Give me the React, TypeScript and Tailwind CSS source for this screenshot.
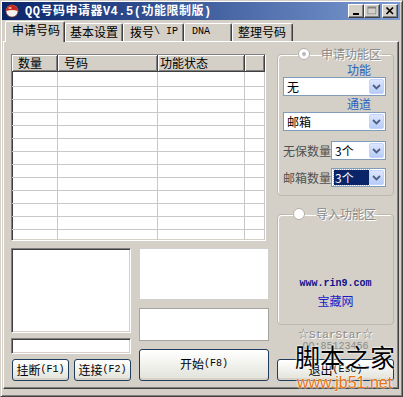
import React from "react";

const cjk = "[font-family:'Noto_Sans_CJK_SC','Noto_Sans',sans-serif]";
const mono = "[font-family:'Liberation_Mono','Noto_Sans_CJK_SC',monospace]";
const sunken =
  "border border-t-[#808080] border-l-[#808080] border-r-white border-b-white shadow-[inset_1px_1px_0_#404040,inset_-1px_-1px_0_#d4d0c8]";
const raised =
  "border border-t-white border-l-white border-r-[#404040] border-b-[#404040] shadow-[inset_-1px_-1px_0_#808080]";
const xpButton =
  "flex items-center justify-center rounded-[3px] border border-[#1f3d5c] bg-linear-to-b from-white to-[#e2e2da] shadow-[inset_0_-2px_0_#d8d2c6,inset_0_1px_0_#fff] text-[12px] text-black";

type Tab = { label: React.ReactNode; w: string; pl: string };

const tabs: Tab[] = [
  { label: "基本设置", w: "w-[58px]", pl: "pl-[4px]" },
  {
    label: (
      <>
        拨号<span className={`${mono} text-[10px]`}>\ IP</span>
      </>
    ),
    w: "w-[61px]",
    pl: "pl-[6px]",
  },
  { label: <span className={`${mono} text-[10px]`}>DNA</span>, w: "w-[48px]", pl: "pl-[7px]" },
  { label: "整理号码", w: "w-[61px]", pl: "pl-[5px]" },
];

const cols = ["w-[46px]", "w-[100px]", "w-[87px]", "w-[20px]"];

function Ascii({ children }: { children: React.ReactNode }) {
  return <span className={`${mono} text-[10px]`}>{children}</span>;
}

function CaptionBtn({ children }: { children: React.ReactNode }) {
  return (
    <div className={`h-[14px] w-[16px] bg-[#d4d0c8] ${raised} flex items-center justify-center`}>
      {children}
    </div>
  );
}

function TitleBar() {
  const a = `${mono} text-[12px]`;
  return (
    <div className="flex h-[18px] items-center bg-linear-to-r from-[#0a246a] to-[#7d9bd2] pl-[3px] pr-[2px]">
      <svg width="14" height="14" viewBox="0 0 14 14">
        <circle cx="7" cy="7" r="6.2" fill="#f6f2ee" stroke="#5a1a14" strokeWidth="0.8" />
        <path d="M1 7 A6 6 0 0 1 13 7 Q7 5 1 7 Z" fill="#c8281e" />
        <ellipse cx="5" cy="4" rx="1.6" ry="0.9" fill="#f6c0b0" />
      </svg>
      <span className={`ml-[6px] text-[12px] font-bold leading-[18px] tracking-[0.5px] text-white ${cjk}`}>
        <span className={a}>QQ</span>号码申请器<span className={a}>V4.5(</span>功能限制版<span className={a}>)</span>
      </span>
      <div className="ml-auto flex items-center">
        <CaptionBtn>
          <svg width="10" height="10" viewBox="0 0 10 10">
            <rect x="2" y="7" width="6" height="2" fill="#000" />
          </svg>
        </CaptionBtn>
        <CaptionBtn>
          <svg width="10" height="10" viewBox="0 0 10 10">
            <rect x="1.5" y="1.5" width="8" height="7" fill="none" stroke="#fff" />
            <rect x="1" y="1" width="8" height="7" fill="none" stroke="#808080" />
            <rect x="1" y="1" width="8" height="1.5" fill="#808080" />
          </svg>
        </CaptionBtn>
        <div className="w-[2px]" />
        <CaptionBtn>
          <svg width="10" height="10" viewBox="0 0 10 10">
            <path d="M1.5 1.5 L8 8 M8 1.5 L1.5 8" stroke="#000" strokeWidth="1.7" />
          </svg>
        </CaptionBtn>
      </div>
    </div>
  );
}

function Combo({ text, selected }: { text: string; selected?: boolean }) {
  return (
    <div className="flex h-[19px] flex-1 items-center border border-[#7f9db9] bg-white pl-[2px]">
      {selected ? (
        <span className="flex h-[15px] w-[35px] items-center bg-[#0a246a] pl-[1px] text-white outline-1 outline-dotted outline-[#e0b060]">
          3个
        </span>
      ) : (
        <span className="pl-[1px]">{text}</span>
      )}
      <div className="mr-px ml-auto flex h-[15px] w-[15px] items-center justify-center rounded-[2px] border border-[#c3d3fd] bg-linear-to-b from-[#dce6fe] to-[#b7cbf7]">
        <svg width="9" height="6" viewBox="0 0 9 6">
          <path d="M1 1 L4.5 4.5 L8 1" fill="none" stroke="#4d6185" strokeWidth="1.8" />
        </svg>
      </div>
    </div>
  );
}

function Radio({ dot }: { dot?: boolean }) {
  return (
    <span className="flex h-[12px] w-[12px] items-center justify-center rounded-full border border-[#b4b0a8] bg-white">
      {dot && <span className="h-[4px] w-[4px] rounded-full bg-[#b8b8b8]" />}
    </span>
  );
}

function Legend({ text, dot }: { text: string; dot?: boolean }) {
  return (
    <legend className="ml-[14px] px-[1px]">
      <span className="flex h-[14px] items-center">
        <Radio dot={dot} />
        <span className="ml-[11px] text-[#8a8a8a] [text-shadow:1px_1px_0_#fff]">{text}</span>
      </span>
    </legend>
  );
}

function Grid() {
  return (
    <div className={`h-[187px] w-[255px] overflow-hidden bg-white ${sunken}`}>
      <div className="flex h-[17px] bg-[#d4d0c8]">
        {[
          { t: "数量", pl: "pl-[6px]" },
          { t: "号码", pl: "pl-[6px]" },
          { t: "功能状态", pl: "pl-[2px]" },
          { t: "", pl: "" },
        ].map((c, i) => (
          <div
            key={i}
            className={`${cols[i]} ${c.pl} h-[17px] shrink-0 border-r border-b border-[#404040] leading-[16px] shadow-[inset_1px_1px_0_#fff,inset_-1px_-1px_0_#808080]`}
          >
            {c.t}
          </div>
        ))}
      </div>
      {Array.from({ length: 13 }).map((_, r) => (
        <div key={r} className={`flex border-b border-[#c8c8c8] ${r === 0 ? "h-[15px]" : "h-[13px]"}`}>
          {cols.map((w, i) => (
            <div key={i} className={`${w} shrink-0 border-r border-[#c8c8c8]`} />
          ))}
        </div>
      ))}
    </div>
  );
}

export default function App() {
  return (
    <div
      className={`relative h-[397px] w-[403px] overflow-hidden border border-t-[#d4d0c8] border-l-[#d4d0c8] border-r-[#404040] border-b-[#404040] bg-[#d4d0c8] pt-[1px] pr-[2px] pl-[1px] text-[12px] leading-[14px] text-black shadow-[inset_1px_1px_0_#fff,inset_-1px_-1px_0_#808080] ${cjk}`}
    >
      <TitleBar />

      <div className="ml-[1px] w-[396px]">
        {/* tab strip */}
        <div className="flex h-[21px] items-end pl-[2px]">
          <div className="relative z-10 -mb-px flex h-[21px] w-[60px] items-start rounded-t-[2px] border-t border-l border-r border-t-white border-l-white border-r-[#404040] bg-[#d4d0c8] pt-[1px] pl-[6px] text-[12px] shadow-[inset_-1px_0_0_#808080]">
            申请号码
          </div>
          {tabs.map((t, i) => (
            <div
              key={i}
              className={`${t.w} ${t.pl} flex h-[18px] items-center rounded-t-[2px] border-t border-l border-r border-t-white border-l-white border-r-[#404040] pb-[1px] shadow-[inset_-1px_0_0_#808080]`}
            >
              {t.label}
            </div>
          ))}
        </div>

        {/* tab page */}
        <div className="flex h-[348px] border border-t-white border-l-white border-r-[#404040] border-b-[#404040] pt-[5px] pl-[7px] shadow-[inset_-1px_-1px_0_#808080]">
          <div className="mt-[7px] flex w-[258px] flex-col">
            <Grid />

            <div className="mt-[7px] flex gap-[8px]">
              <div className="flex w-[120px] flex-col">
                <div className={`h-[85px] bg-white ${sunken}`} />
                <div className={`mt-[5px] h-[16px] bg-white ${sunken}`} />
                <div className="mt-[5px] flex gap-[5px] pl-[1px]">
                  <button className={`h-[22px] w-[57px] ${xpButton}`}>
                    挂断<Ascii>(F1)</Ascii>
                  </button>
                  <button className={`h-[22px] w-[57px] ${xpButton}`}>
                    连接<Ascii>(F2)</Ascii>
                  </button>
                </div>
              </div>

              <div className="flex w-[130px] flex-col">
                <div className="h-[52px] border border-[#d0d0cc] bg-white" />
                <div className="mt-[8px] h-[33px] border border-[#a4a4a0] bg-white" />
                <button className={`mt-[8px] h-[32px] w-full pb-[2px] ${xpButton}`}>
                  开始<Ascii>(F8)</Ascii>
                </button>
              </div>
            </div>
          </div>

          <div className="ml-[8px] flex w-[117px] flex-col">
            <fieldset className="rounded-[4px] border border-[#bcb8ae] pr-[7px] pb-[8px] pl-[5px] shadow-[inset_1px_1px_0_#fff]">
              <Legend text="申请功能区" dot />
              <div className="mt-[2px] h-[14px] pr-[15px] text-right leading-[14px] text-[#2a62c0]">功能</div>
              <div className="flex">
                <Combo text="无" />
              </div>
              <div className="h-[16px] pr-[15px] text-right leading-[16px] text-[#2a62c0]">通道</div>
              <div className="flex">
                <Combo text="邮箱" />
              </div>
              <div className="mt-[10px] flex items-center">
                <span className="w-[48px] text-[#505050]">无保数量</span>
                <Combo text="3个" />
              </div>
              <div className="mt-[8px] flex items-center">
                <span className="w-[48px] text-[#505050]">邮箱数量</span>
                <Combo text="3个" selected />
              </div>
            </fieldset>

            <fieldset className="mt-[11px] rounded-[4px] border border-[#bcb8ae] shadow-[inset_1px_1px_0_#fff]">
              <Legend text="导入功能区" />
              <div className="flex h-[103px] flex-col items-center pt-[57px]">
                <span className={`${mono} h-[12px] text-[10px] leading-[12px] font-bold text-[#10108a]`}>
                  www.rin9.com
                </span>
                <span className="mt-[4px] h-[14px] text-[#1a1ac8]">宝藏网</span>
              </div>
            </fieldset>

            <div className={`${mono} mt-[4px] h-[12px] text-center text-[11px] leading-[12px] text-[#8a8a8a] [text-shadow:1px_1px_0_#fff]`}>
              ☆StarStar☆
            </div>
            <div className={`${mono} h-[12px] text-center text-[10px] leading-[12px] text-[#8a8a8a]`}>
              QQ:85123456
            </div>
            <button className={`mt-[6px] h-[22px] w-full ${xpButton}`}>
              退出<Ascii>(Esc)</Ascii>
            </button>
          </div>
        </div>
      </div>

      {/* site watermark over the screenshot */}
      <div className="absolute top-[343px] left-[294px] text-[25px] leading-none text-black [text-shadow:0_0_2px_#fff,0_0_2px_#fff]">
        脚本之家
      </div>
      <div className="absolute top-[374px] left-[296px] text-[16px] leading-none text-[#e8730f] [font-family:'Liberation_Sans',sans-serif] [text-shadow:0_0_2px_#fff,0_0_2px_#fff]">
        www.jb51.net
      </div>
    </div>
  );
}
